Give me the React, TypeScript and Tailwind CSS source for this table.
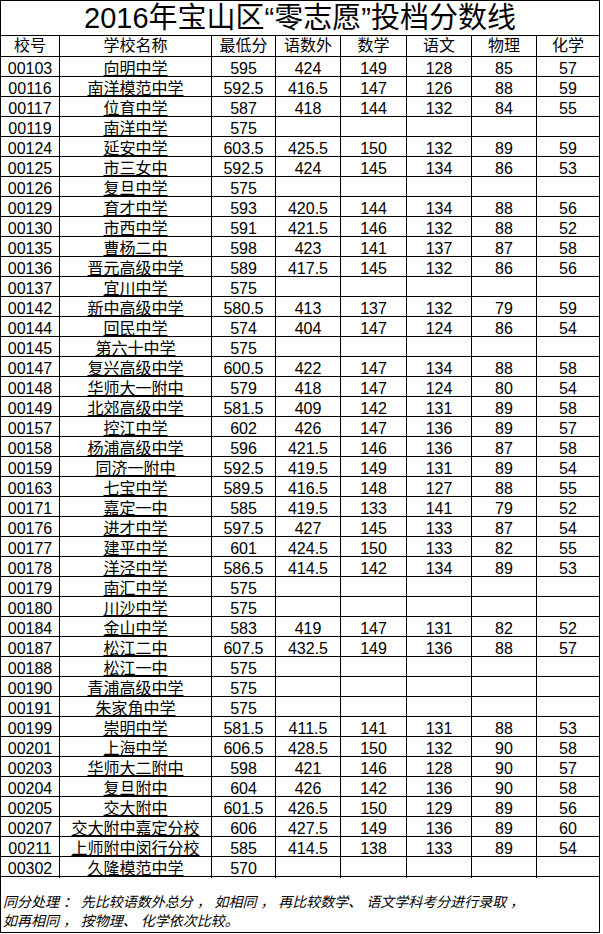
const rows: (string | number)[][] = [
  ["00103", "向明中学", 595, 424, 149, 128, 85, 57],
  ["00116", "南洋模范中学", 592.5, 416.5, 147, 126, 88, 59],
  ["00117", "位育中学", 587, 418, 144, 132, 84, 55],
  ["00119", "南洋中学", 575],
  ["00124", "延安中学", 603.5, 425.5, 150, 132, 89, 59],
  ["00125", "市三女中", 592.5, 424, 145, 134, 86, 53],
  ["00126", "复旦中学", 575],
  ["00129", "育才中学", 593, 420.5, 144, 134, 88, 56],
  ["00130", "市西中学", 591, 421.5, 146, 132, 88, 52],
  ["00135", "曹杨二中", 598, 423, 141, 137, 87, 58],
  ["00136", "晋元高级中学", 589, 417.5, 145, 132, 86, 56],
  ["00137", "宜川中学", 575],
  ["00142", "新中高级中学", 580.5, 413, 137, 132, 79, 59],
  ["00144", "回民中学", 574, 404, 147, 124, 86, 54],
  ["00145", "第六十中学", 575],
  ["00147", "复兴高级中学", 600.5, 422, 147, 134, 88, 58],
  ["00148", "华师大一附中", 579, 418, 147, 124, 80, 54],
  ["00149", "北郊高级中学", 581.5, 409, 142, 131, 89, 58],
  ["00157", "控江中学", 602, 426, 147, 136, 89, 57],
  ["00158", "杨浦高级中学", 596, 421.5, 146, 136, 87, 58],
  ["00159", "同济一附中", 592.5, 419.5, 149, 131, 89, 54],
  ["00163", "七宝中学", 589.5, 416.5, 148, 127, 88, 55],
  ["00171", "嘉定一中", 585, 419.5, 133, 141, 79, 52],
  ["00176", "进才中学", 597.5, 427, 145, 133, 87, 54],
  ["00177", "建平中学", 601, 424.5, 150, 133, 82, 55],
  ["00178", "洋泾中学", 586.5, 414.5, 142, 134, 89, 53],
  ["00179", "南汇中学", 575],
  ["00180", "川沙中学", 575],
  ["00184", "金山中学", 583, 419, 147, 131, 82, 52],
  ["00187", "松江二中", 607.5, 432.5, 149, 136, 88, 57],
  ["00188", "松江一中", 575],
  ["00190", "青浦高级中学", 575],
  ["00191", "朱家角中学", 575],
  ["00199", "崇明中学", 581.5, 411.5, 141, 131, 88, 53],
  ["00201", "上海中学", 606.5, 428.5, 150, 132, 90, 58],
  ["00203", "华师大二附中", 598, 421, 146, 128, 90, 57],
  ["00204", "复旦附中", 604, 426, 142, 136, 90, 58],
  ["00205", "交大附中", 601.5, 426.5, 150, 129, 89, 56],
  ["00207", "交大附中嘉定分校", 606, 427.5, 149, 136, 89, 60],
  ["00211", "上师附中闵行分校", 585, 414.5, 138, 133, 89, 54],
  ["00302", "久隆模范中学", 570],
];

const headers = ["校号", "学校名称", "最低分", "语数外", "数学", "语文", "物理", "化学"];

const cols = "grid grid-cols-[59px_152px_64px_65px_66px_65px_65px_63px]";
const cell = "flex items-center justify-center border-r border-black whitespace-nowrap";

export default function App() {
  return (
    <div
      className="w-[603px] h-[934px] bg-white text-black"
      style={{ fontFamily: '"Liberation Sans", "Noto Sans CJK SC", sans-serif' }}
    >
      <div className="w-[600px] border-l border-t border-black">
        {/* title */}
        <div className="h-[35px] flex items-center justify-center border-r border-b border-black text-[29px] leading-[32px]">
          2016年宝山区“零志愿”投档分数线
        </div>

        <div className={`${cols} h-[21px] border-b border-black text-[16px] leading-[20px]`}>
          {headers.map((h) => (
            <div key={h} className={cell}>
              {h}
            </div>
          ))}
        </div>

        {rows.map((r) => (
          <div key={r[0]} className={`${cols} h-[20px] border-b border-black text-[16px] leading-[19px]`}>
            {Array.from({ length: 8 }).map((_, i) => (
              <div key={i} className={`${cell} pt-[2px]`}>
                {i === 1 ? <span className="underline underline-offset-[1px]">{r[1]}</span> : r[i] ?? ""}
              </div>
            ))}
          </div>
        ))}

        {/* note */}
        <div className="h-[56px] flex flex-col justify-end border-r border-b border-black pl-[2px] pb-[1px] text-[14px] leading-[19px] italic whitespace-nowrap">
          <span>同分处理 ： 先比较语数外总分 ， 如相同 ， 再比较数学、 语文学科考分进行录取 ，</span>
          <span>如再相同 ， 按物理、 化学依次比较。</span>
        </div>
      </div>
    </div>
  );
}
